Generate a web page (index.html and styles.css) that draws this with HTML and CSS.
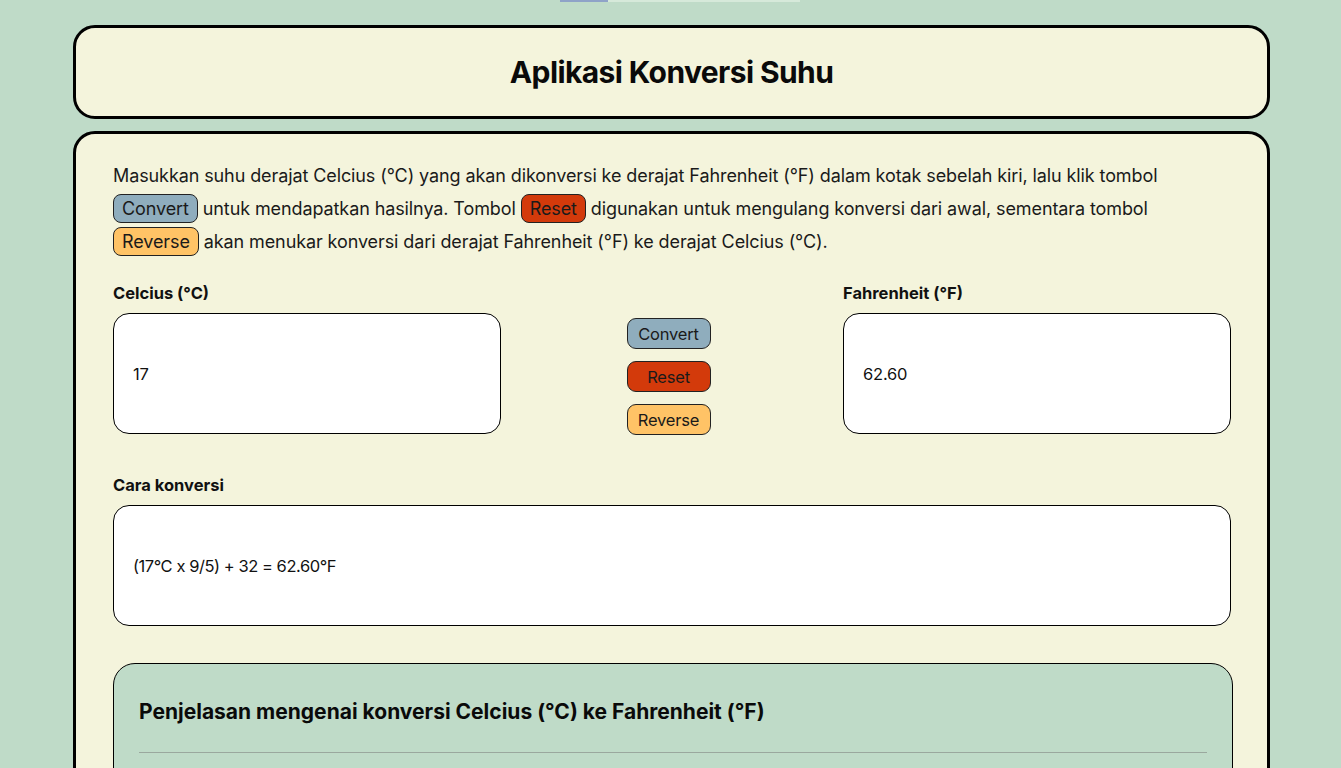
FILE: index.html
```html
<!DOCTYPE html>
<html lang="id">
<head>
<meta charset="utf-8">
<title>Aplikasi Konversi Suhu</title>
<link rel="stylesheet" href="styles.css">
</head>
<body>
<div class="topbar"><div class="topbar-fill"></div></div>
<div class="wrap">
  <header class="card header">
    <h1>Aplikasi Konversi Suhu</h1>
  </header>
  <main class="card main">
    <p class="intro">Masukkan suhu derajat Celcius (°C) yang akan dikonversi ke derajat Fahrenheit (°F) dalam kotak sebelah kiri, lalu klik tombol <span class="tag convert">Convert</span> untuk mendapatkan hasilnya. Tombol <span class="tag reset">Reset</span> digunakan untuk mengulang konversi dari awal, sementara tombol <span class="tag reverse">Reverse</span> akan menukar konversi dari derajat Fahrenheit (°F) ke derajat Celcius (°C).</p>

    <div class="converter">
      <div class="field">
        <label class="label">Celcius (°C)</label>
        <div class="box">17</div>
      </div>
      <div class="buttons">
        <button class="btn convert">Convert</button>
        <button class="btn reset">Reset</button>
        <button class="btn reverse">Reverse</button>
      </div>
      <div class="field">
        <label class="label">Fahrenheit (°F)</label>
        <div class="box">62.60</div>
      </div>
    </div>

    <div class="field formula">
      <label class="label">Cara konversi</label>
      <div class="box formula-box">(17°C x 9/5) + 32 = 62.60°F</div>
    </div>

    <section class="explain">
      <h2>Penjelasan mengenai konversi Celcius (°C) ke Fahrenheit (°F)</h2>
      <hr>
    </section>
  </main>
</div>
</body>
</html>
```
FILE: styles.css
```css
* { box-sizing: border-box; }
html, body { margin: 0; padding: 0; }
body {
  background: #bfdbc8;
  font-family: "Inter", "Open Sans", sans-serif;
  color: #111;
  height: 768px;
  overflow: hidden;
}
.topbar {
  display: flex;
  justify-content: center;
  height: 2px;
  padding-left: 19px;
}
.topbar-fill {
  width: 240px;
  height: 2px;
  background: linear-gradient(to right, #8fa3c8 0 48px, #d6e9da 48px);
}
.wrap {
  padding: 23px 71px 0 73px;
  display: flex;
  flex-direction: column;
  gap: 12px;
}
.card {
  background: #f4f4dc;
  border: 3px solid #000;
  border-radius: 22px;
}
.header {
  height: 94px;
  display: flex;
  align-items: center;
  justify-content: center;
}
.header h1 {
  margin: 0;
  font-size: 30px;
  font-weight: 700;
  letter-spacing: -0.6px;
  color: #0a0a0a;
}
.main {
  padding: 25px 36px 40px 37px;
}
.intro {
  margin: 0;
  font-size: 18px;
  line-height: 33px;
  letter-spacing: -0.1px;
  color: #1a1a1a;
}
.tag {
  display: inline-block;
  border: 1px solid #222;
  border-radius: 8px;
  padding: 0 8px;
  line-height: 27px;
  height: 29px;
  vertical-align: baseline;
}
.convert { background: #8fadbd; }
.reset { background: #d33a0b; }
.reverse { background: #ffc366; }

.converter {
  display: grid;
  grid-template-columns: 388px 1fr 388px;
  margin-top: 25px;
}
.field { display: flex; flex-direction: column; }
.label {
  font-size: 16.5px;
  font-weight: 700;
  letter-spacing: 0;
  line-height: 20px;
  margin-bottom: 10px;
  color: #111;
}
.box {
  background: #fff;
  border: 1px solid #000;
  border-radius: 16px;
  height: 121px;
  display: flex;
  align-items: center;
  padding-left: 19px;
  font-size: 16.5px;
  letter-spacing: -0.2px;
  color: #111;
}
.formula-box { letter-spacing: -0.45px; }
.buttons {
  display: flex;
  flex-direction: column;
  align-items: center;
  gap: 12px;
  padding-top: 35px;
  padding-right: 7px;
}
.btn {
  width: 84px;
  height: 31px;
  border: 1px solid #222;
  border-radius: 9px;
  font-family: inherit;
  font-size: 16.5px;
  letter-spacing: -0.2px;
  color: #1a1a1a;
  padding: 0;
}
.formula { margin-top: 40px; }
.explain {
  margin-top: 37px;
  margin-right: -2px;
  background: #bfdbc8;
  border: 1px solid #000;
  border-radius: 22px;
  padding: 35px 25px 40px 25px;
}
.explain h2 {
  margin: 0;
  font-size: 21px;
  font-weight: 700;
  letter-spacing: 0;
  color: #0a0a0a;
}
.explain hr {
  margin: 28px 0 0;
  border: 0;
  height: 1px;
  background: #9aa89e;
}
```
